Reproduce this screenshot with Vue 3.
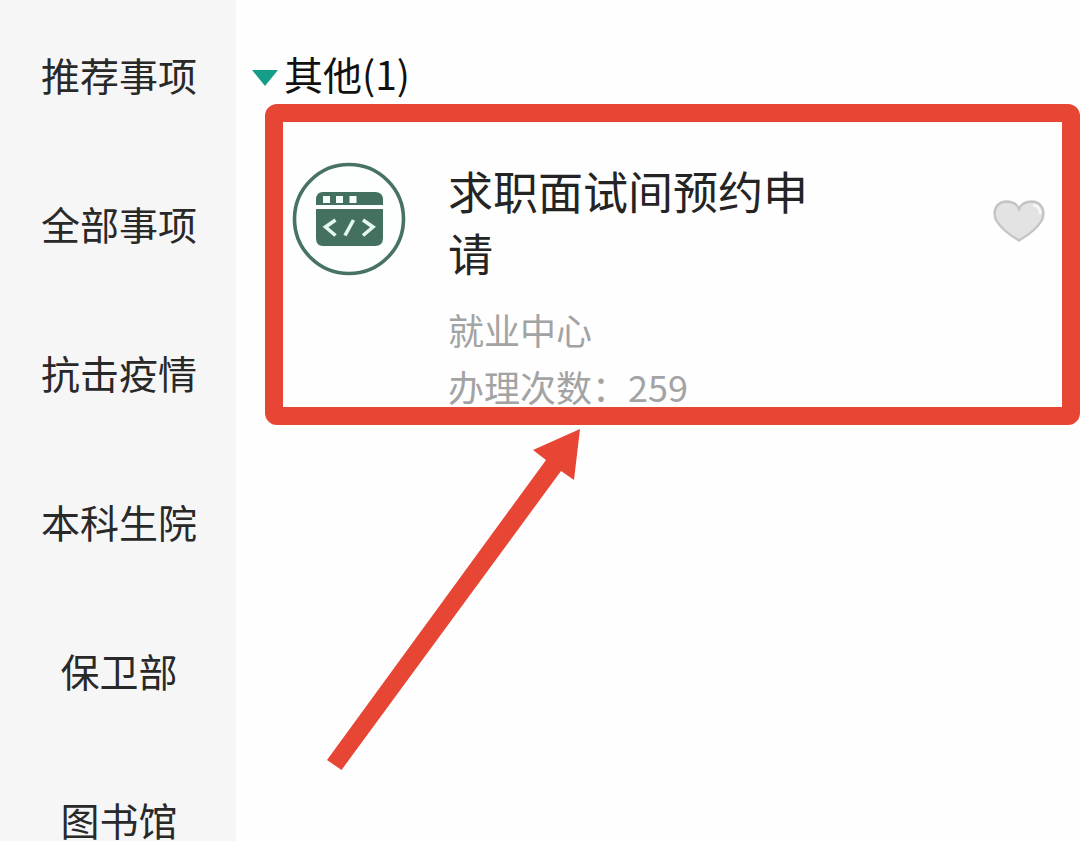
<script setup>
const categories = ['推荐事项', '全部事项', '抗击疫情', '本科生院', '保卫部', '图书馆']
const group = { name: '其他', count: 1 }
const service = { title: '求职面试间预约申请', department: '就业中心', times: 259 }
</script>

<template>
  <div class="page">
    <nav class="sidebar" aria-label="事项分类">
      <button v-for="item in categories" :key="item" type="button" class="category">{{ item }}</button>
    </nav>
    <main class="content">
      <button type="button" class="group" aria-expanded="true">
        <svg class="caret" viewBox="0 0 28 18" aria-hidden="true"><path d="M1 1H27L14 17Z" fill="#159d8a" /></svg>
        <span>{{ group.name }}({{ group.count }})</span>
      </button>
      <article class="card">
        <svg class="badge" viewBox="0 0 114 114" aria-hidden="true">
          <circle cx="57" cy="57" r="54.5" fill="#fdfffe" stroke="#487266" stroke-width="3.6" />
          <path d="M31 30H83Q91 30 91 38V43H24V38Q24 30 31 30Z" fill="#43705f" />
          <path d="M24 47H91V76Q91 84 83 84H31Q24 84 24 76Z" fill="#43705f" />
          <path d="M31 34h7v7h-7zM44 34h7v7h-7zM57.500 34h7v7h-7z" fill="#f4fffb" />
          <path d="M43.500 58L33.500 65L43.500 73.500M61.500 58L53 73.500M71 58L81 65L71 73.500" fill="none" stroke="#e5f8f0" stroke-width="3.6" />
        </svg>
        <div class="info">
          <h2>{{ service.title }}</h2>
          <p>{{ service.department }}</p>
          <p>办理次数：{{ service.times }}</p>
        </div>
        <button type="button" class="favorite" aria-label="收藏">
          <svg viewBox="0 0 52 42" aria-hidden="true">
            <path d="M26 40.500C20 37 8 29 3 20C-1 10 4 2 13 1.500C20 1.500 24 4 26 9C28 4 32 1.500 39 1.500C48 2 53 10 49 20C44 29 32 37 26 40.500Z" fill="#e3e3e3" stroke="#c4c4c4" stroke-width="2.400" />
            <path d="M41 5C45 6 47 9 47 13" fill="none" stroke="#f8f8f8" stroke-width="2.500" stroke-linecap="round" />
          </svg>
        </button>
      </article>
      <svg class="arrow" viewBox="0 0 254 342" aria-hidden="true">
        <path d="M253 0L247 51L234 42L14.500 341L0 331L219 31L206 21Z" fill="#e84635" />
      </svg>
    </main>
  </div>
</template>

<style>
body {
  margin: 0;
}
</style>

<style scoped>
.page {
  display: flex;
  height: 100vh;
  overflow: hidden;
  background: #fefefe;
  font-family: "Noto Sans CJK SC", sans-serif;
}
button {
  margin: 0;
  padding: 0;
  border: 0;
  background: none;
  font: inherit;
  color: inherit;
  cursor: pointer;
}
.sidebar {
  display: flex;
  flex: none;
  flex-direction: column;
  box-sizing: border-box;
  width: 236px;
  padding-left: 2px;
  background: #f6f6f6;
}
.category {
  flex: none;
  height: 149px;
  padding-bottom: 2px;
  font-size: 39px;
  line-height: 40px;
  color: #292929;
}
.content {
  flex: 1;
  min-width: 0;
  padding-top: 45px;
}
.group {
  display: flex;
  align-items: center;
  gap: 5px;
  height: 59px;
  padding-bottom: 3px;
  margin-left: 15px;
  font-size: 39px;
  line-height: 56px;
  color: #111;
}
.caret {
  width: 28px;
  height: 18px;
  margin-top: 10px;
}
.card {
  display: flex;
  align-items: flex-start;
  box-sizing: border-box;
  margin-left: 29px;
  padding: 38px 17px 0 9px;
  border: 18px solid #e84635;
  border-radius: 12px;
}
.badge {
  flex: none;
  width: 114px;
  height: 114px;
  margin-top: 2px;
}
.info {
  flex: 1;
  min-width: 0;
  margin-left: 42px;
}
h2 {
  max-width: 366px;
  margin: 0 0 17px;
  font-size: 45px;
  font-weight: 400;
  line-height: 62px;
  color: #242424;
}
p {
  margin: 0;
  font-size: 36px;
  line-height: 57px;
  color: #a3a3a3;
}
p:last-child {
  height: 49px;
}
.favorite {
  flex: none;
  width: 52px;
  height: 42px;
  margin-top: 40px;
}
.favorite svg {
  display: block;
}
.arrow {
  display: block;
  width: 254px;
  height: 342px;
  margin: 4px 0 0 91px;
}
</style>
